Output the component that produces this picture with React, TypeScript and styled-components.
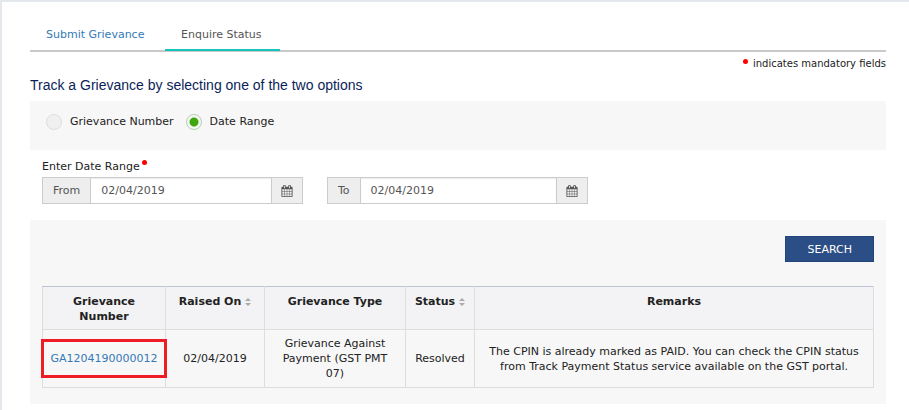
import React, { useState } from "react";
import styled, { createGlobalStyle, css } from "styled-components";

const Global = createGlobalStyle`
  *, *::before, *::after { box-sizing: border-box; }
  body {
    margin: 0;
    background: #fff;
    color: #222;
    font: 11px/15px "DejaVu Sans", Verdana, sans-serif;
  }
  button, input { font: inherit; }
`;

const Page = styled.main`
  min-height: 100vh;
  padding: 17px 23px 6px 28px;
  border: solid #e4e7eb;
  border-width: 2px 0 0 2px;
`;

const Tabs = styled.nav`
  display: flex;
  align-items: flex-end;
  height: 33px;
  border-bottom: 2px solid #c9c9c9;
`;

const Tab = styled.a<{ $active?: boolean }>`
  height: 32px;
  min-width: 135px;
  padding: 9px 16px 0;
  color: #337ab7;
  text-decoration: none;
  ${(p) =>
    p.$active &&
    css`
      min-width: 115px;
      padding: 8px 16px 0;
      margin-bottom: -1px;
      color: #555;
      border-bottom: 2px solid #17c4bb;
    `}
`;

const Dot = styled.span`
  display: inline-block;
  width: 5px;
  height: 5px;
  margin: 0 0 5px 2px;
  border-radius: 50%;
  background: #f00;
`;

const MandatoryNote = styled.p`
  display: flex;
  justify-content: flex-end;
  align-items: center;
  gap: 5px;
  margin: 4px 0 0;
  font-size: 10px;
`;

const Heading = styled.h1`
  margin: 5px 0 7px;
  color: #0b1e59;
  font: 14px/18px "Liberation Sans", Arial, sans-serif;
`;

const Options = styled.fieldset`
  display: flex;
  gap: 12px;
  margin: 0;
  padding: 13px 16px 20px;
  border: 0;
  background: #f7f7f7;
`;

const Option = styled.label`
  display: flex;
  gap: 8px;
`;

const Radio = styled.input`
  appearance: none;
  width: 16px;
  height: 16px;
  margin: 0;
  border: 1px solid #ddd;
  border-radius: 50%;
  background: #f0f0f0;
  &:checked {
    border-color: #b7cfb0;
    background: radial-gradient(circle, #3fa80f 0 4px, #f7f7f7 5px);
  }
`;

const Dates = styled.section`
  padding: 9px 12px 16px;
`;

const DateLabel = styled.p`
  margin: 0 0 3px;
`;

const DateRow = styled.div`
  display: flex;
  gap: 24px;
`;

const InputGroup = styled.div`
  display: flex;
  flex: 0 1 261px;
  height: 27px;
  border: 1px solid #ccc;
  color: #555;
`;

const Addon = styled.label`
  padding: 5px 10px;
  border-right: 1px solid #ccc;
  background: #eee;
`;

const DateInput = styled.input`
  flex: 1;
  min-width: 0;
  padding: 0 10px;
  border: 0;
  background: #fff;
  color: #555;
  box-shadow: inset 0 1px 1px #ececec;
`;

const PickButton = styled.button`
  display: flex;
  align-items: center;
  justify-content: center;
  width: 31px;
  padding: 0;
  border: 0;
  border-left: 1px solid #ccc;
  background: #eee;
  color: #555;
`;

const Results = styled.section`
  display: flex;
  flex-direction: column;
  gap: 24px;
  padding: 16px 12px;
  background: #f7f7f7;
`;

const SearchButton = styled.button`
  align-self: flex-end;
  height: 26px;
  padding: 0 21px;
  border: 1px solid #23457c;
  background: #2c4e86;
  color: #fff;
`;

const Table = styled.table`
  width: 100%;
  table-layout: fixed;
  border-collapse: collapse;
  text-align: center;
`;

const Col = styled.col<{ $width?: number }>`
  width: ${(p) => (p.$width ? `${p.$width}px` : "auto")};
`;

const Th = styled.th`
  padding: 7px 6px 5px;
  border: 1px solid #ddd;
  border-top-color: #bfc4d2;
  background: #f3f3f6;
  vertical-align: top;
  font-weight: 700;
`;

const Td = styled.td<{ $pad?: number }>`
  height: 58px;
  padding: 6px ${(p) => p.$pad ?? 6}px;
  border: 1px solid #ddd;
`;

const GrievanceLink = styled.a`
  display: block;
  padding: 9px 0;
  outline: 3px solid #ee1c25;
  color: #337ab7;
  text-decoration: none;
`;

const SortLabel = styled.span`
  display: flex;
  align-items: center;
  justify-content: center;
  gap: 4px;
`;

const CalendarIcon = () => (
  <svg width="12" height="12" viewBox="0 0 1792 1792" fill="currentColor" aria-hidden="true">
    <path d="M192 1664h288v-288h-288v288zm352 0h320v-288h-320v288zm-352-352h288v-320h-288v320zm352 0h320v-320h-320v320zm-352-384h288v-288h-288v288zm736 736h320v-288h-320v288zm-384-736h320v-288h-320v288zm768 736h288v-288h-288v288zm-384-352h320v-320h-320v320zm-352-864v-288q0-13-9.5-22.5t-22.5-9.5h-64q-13 0-22.5 9.5t-9.5 22.5v288q0 13 9.5 22.5t22.5 9.5h64q13 0 22.5-9.5t9.5-22.5zm736 864h288v-320h-288v320zm-384-384h320v-288h-320v288zm384 0h288v-288h-288v288zm32-480v-288q0-13-9.5-22.5t-22.5-9.5h-64q-13 0-22.5 9.5t-9.5 22.5v288q0 13 9.5 22.5t22.5 9.5h64q13 0 22.5-9.5t9.5-22.5zm384-64v1280q0 52-38 90t-90 38h-1408q-52 0-90-38t-38-90v-1280q0-52 38-90t90-38h128v-96q0-66 47-113t113-47h64q66 0 113 47t47 113v96h384v-96q0-66 47-113t113-47h64q66 0 113 47t47 113v96h128q52 0 90 38t38 90z" />
  </svg>
);

const SortIcon = () => (
  <svg width="6" height="8" viewBox="0 0 6 8" fill="#aaa" aria-hidden="true">
    <path d="M3 0 6 3H0zM0 5h6L3 8z" />
  </svg>
);

function DateField({ id, label }: { id: string; label: string }) {
  return (
    <InputGroup>
      <Addon htmlFor={id}>{label}</Addon>
      <DateInput id={id} type="text" defaultValue="02/04/2019" />
      <PickButton type="button" aria-label={`${label} date picker`}>
        <CalendarIcon />
      </PickButton>
    </InputGroup>
  );
}

export default function App() {
  const [mode, setMode] = useState("range");
  return (
    <>
      <Global />
      <Page>
        <Tabs>
          <Tab href="#submit">Submit Grievance</Tab>
          <Tab href="#status" $active aria-current="page">
            Enquire Status
          </Tab>
        </Tabs>
        <MandatoryNote>
          <Dot />
          indicates mandatory fields
        </MandatoryNote>
        <Heading>Track a Grievance by selecting one of the two options</Heading>
        <Options aria-label="Search option">
          <Option>
            <Radio type="radio" name="mode" checked={mode === "number"} onChange={() => setMode("number")} />
            Grievance Number
          </Option>
          <Option>
            <Radio type="radio" name="mode" checked={mode === "range"} onChange={() => setMode("range")} />
            Date Range
          </Option>
        </Options>
        <Dates>
          <DateLabel>
            Enter Date Range
            <Dot />
          </DateLabel>
          <DateRow>
            <DateField id="from" label="From" />
            <DateField id="to" label="To" />
          </DateRow>
        </Dates>
        <Results>
          <SearchButton type="button">SEARCH</SearchButton>
          <Table>
            <colgroup>
              <Col $width={123} />
              <Col $width={99} />
              <Col $width={141} />
              <Col $width={69} />
              <Col />
            </colgroup>
            <thead>
              <tr>
                <Th>Grievance Number</Th>
                <Th>
                  <SortLabel>
                    Raised On <SortIcon />
                  </SortLabel>
                </Th>
                <Th>Grievance Type</Th>
                <Th>
                  <SortLabel>
                    Status <SortIcon />
                  </SortLabel>
                </Th>
                <Th>Remarks</Th>
              </tr>
            </thead>
            <tbody>
              <tr>
                <Td $pad={1}>
                  <GrievanceLink href="#GA1204190000012">GA1204190000012</GrievanceLink>
                </Td>
                <Td>02/04/2019</Td>
                <Td $pad={12}>Grievance Against Payment (GST PMT 07)</Td>
                <Td>Resolved</Td>
                <Td>
                  The CPIN is already marked as PAID. You can check the CPIN status from Track
                  Payment Status service available on the GST portal.
                </Td>
              </tr>
            </tbody>
          </Table>
        </Results>
      </Page>
    </>
  );
}
